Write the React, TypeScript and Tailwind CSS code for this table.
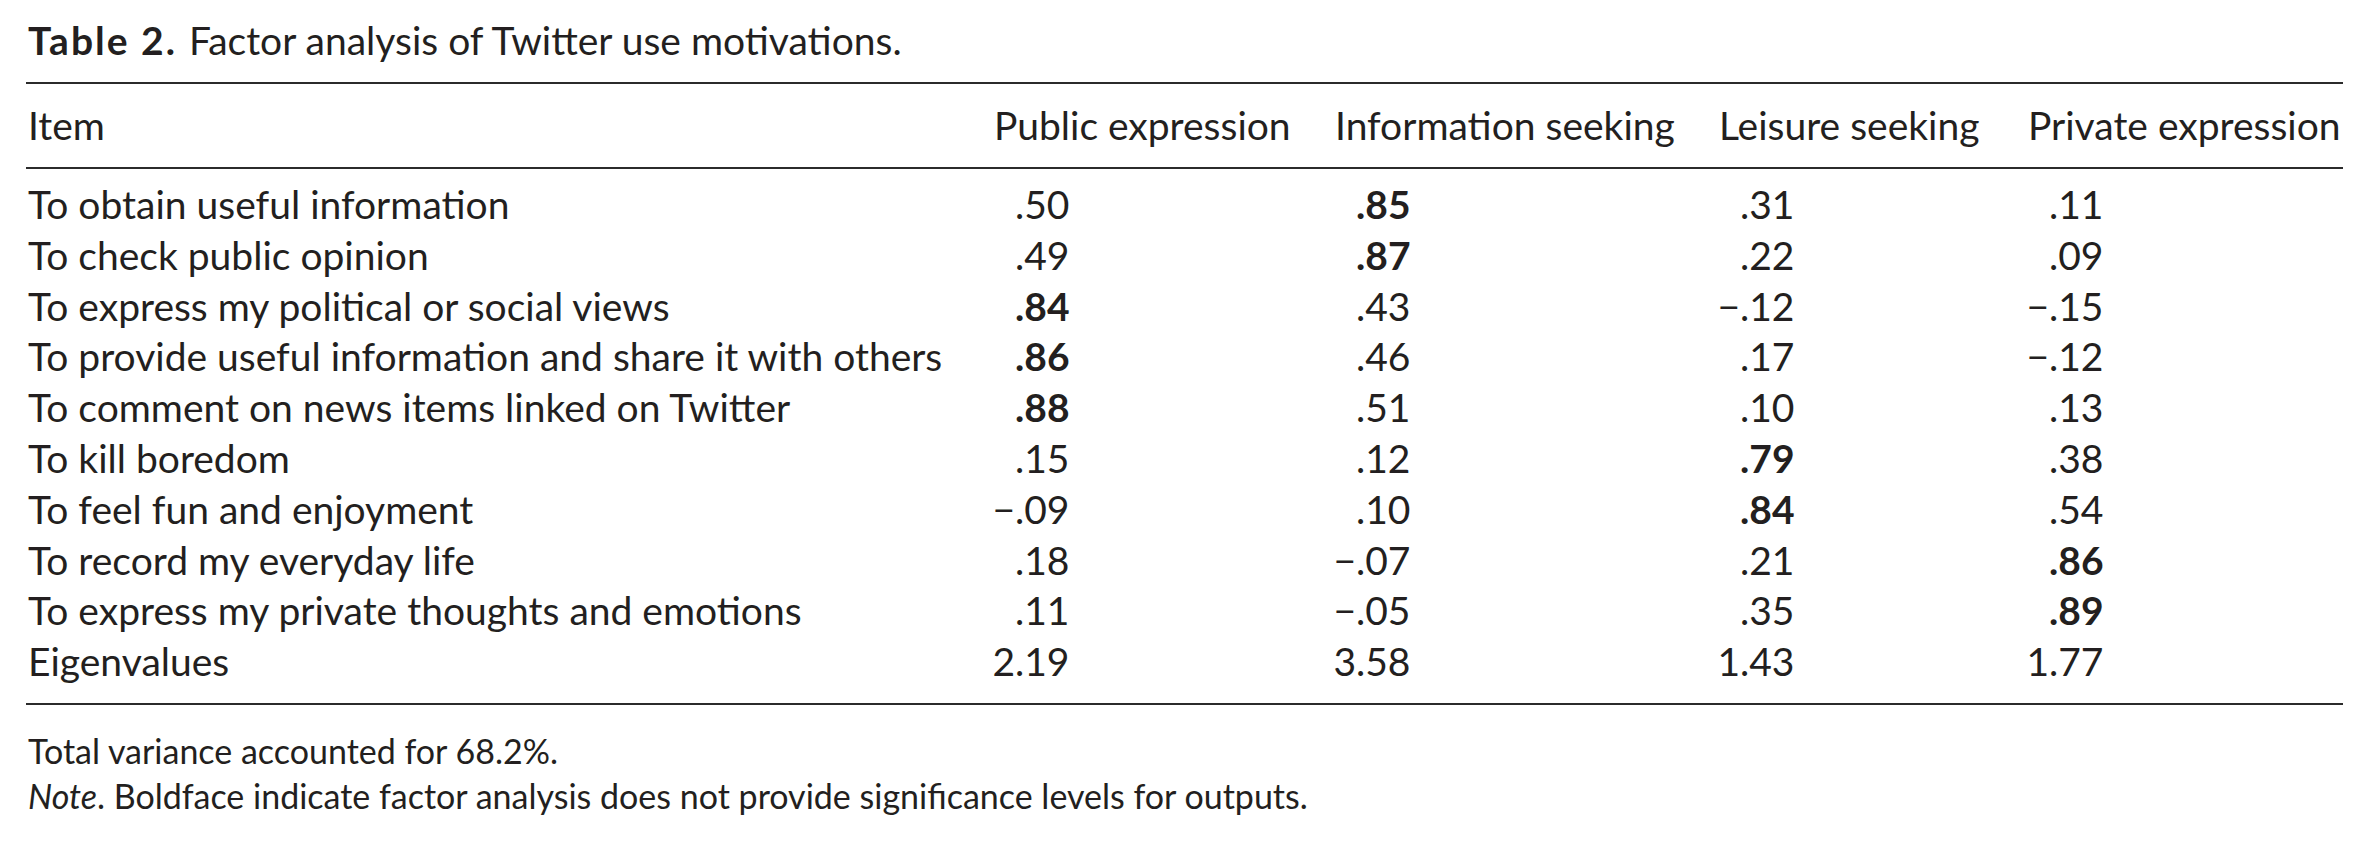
import React from "react";

type Cell = { v: string; b?: boolean };

const rows: { item: string; cells: Cell[] }[] = [
  { item: "To obtain useful information", cells: [{ v: ".50" }, { v: ".85", b: true }, { v: ".31" }, { v: ".11" }] },
  { item: "To check public opinion", cells: [{ v: ".49" }, { v: ".87", b: true }, { v: ".22" }, { v: ".09" }] },
  { item: "To express my political or social views", cells: [{ v: ".84", b: true }, { v: ".43" }, { v: "−.12" }, { v: "−.15" }] },
  { item: "To provide useful information and share it with others", cells: [{ v: ".86", b: true }, { v: ".46" }, { v: ".17" }, { v: "−.12" }] },
  { item: "To comment on news items linked on Twitter", cells: [{ v: ".88", b: true }, { v: ".51" }, { v: ".10" }, { v: ".13" }] },
  { item: "To kill boredom", cells: [{ v: ".15" }, { v: ".12" }, { v: ".79", b: true }, { v: ".38" }] },
  { item: "To feel fun and enjoyment", cells: [{ v: "−.09" }, { v: ".10" }, { v: ".84", b: true }, { v: ".54" }] },
  { item: "To record my everyday life", cells: [{ v: ".18" }, { v: "−.07" }, { v: ".21" }, { v: ".86", b: true }] },
  { item: "To express my private thoughts and emotions", cells: [{ v: ".11" }, { v: "−.05" }, { v: ".35" }, { v: ".89", b: true }] },
  { item: "Eigenvalues", cells: [{ v: "2.19" }, { v: "3.58" }, { v: "1.43" }, { v: "1.77" }] },
];

const headers = ["Public expression", "Information seeking", "Leisure seeking", "Private expression"];

const grid = "grid grid-cols-[968px_341px_384px_309px_1fr]";

function Value({ cell }: { cell: Cell }) {
  // line values up on the decimal point
  const dot = cell.v.indexOf(".");
  const whole = cell.v.slice(0, dot);
  const frac = cell.v.slice(dot);
  return (
    <div className={`flex ${cell.b ? "font-bold" : ""}`}>
      <span className="w-[21px] text-right whitespace-nowrap flex justify-end">{whole}</span>
      <span>{frac}</span>
    </div>
  );
}

export default function App() {
  return (
    <div className="w-[2368px] h-[842px] bg-white text-[#231f20] font-['Lato','Liberation_Sans',sans-serif] overflow-hidden">
      <div className="pl-[26px] pr-[25px] pt-[20px]">
        <h1 className="pl-[2px] text-[39px] leading-[40px] whitespace-nowrap">
          <span className="font-bold tracking-[2px]">Table 2.</span>
          <span className="ml-[12px]">Factor analysis of Twitter use motivations.</span>
        </h1>

        <div className="mt-[22px] text-[39px]">
          <div className={`${grid} border-y-2 border-[#2b2b2b] pt-[16px] pb-[16px] leading-[51px]`}>
            <div className="pl-[2px]">Item</div>
            {headers.map((h) => (
              <div key={h} className="whitespace-nowrap">
                {h}
              </div>
            ))}
          </div>

          <div className="border-b-2 border-[#2b2b2b] pt-[10px] pb-[16px] leading-[50.8px]">
            {rows.map((r) => (
              <div key={r.item} className={grid}>
                <div className="pl-[2px] whitespace-nowrap">{r.item}</div>
                {r.cells.map((c, i) => (
                  <Value key={i} cell={c} />
                ))}
              </div>
            ))}
          </div>
        </div>

        <div className="mt-[23px] pl-[2px] text-[34px] leading-[45px]">
          <p>Total variance accounted for 68.2%.</p>
          <p>
            <span className="italic">Note</span>. Boldface indicate factor analysis does not provide significance levels for outputs.
          </p>
        </div>
      </div>
    </div>
  );
}
